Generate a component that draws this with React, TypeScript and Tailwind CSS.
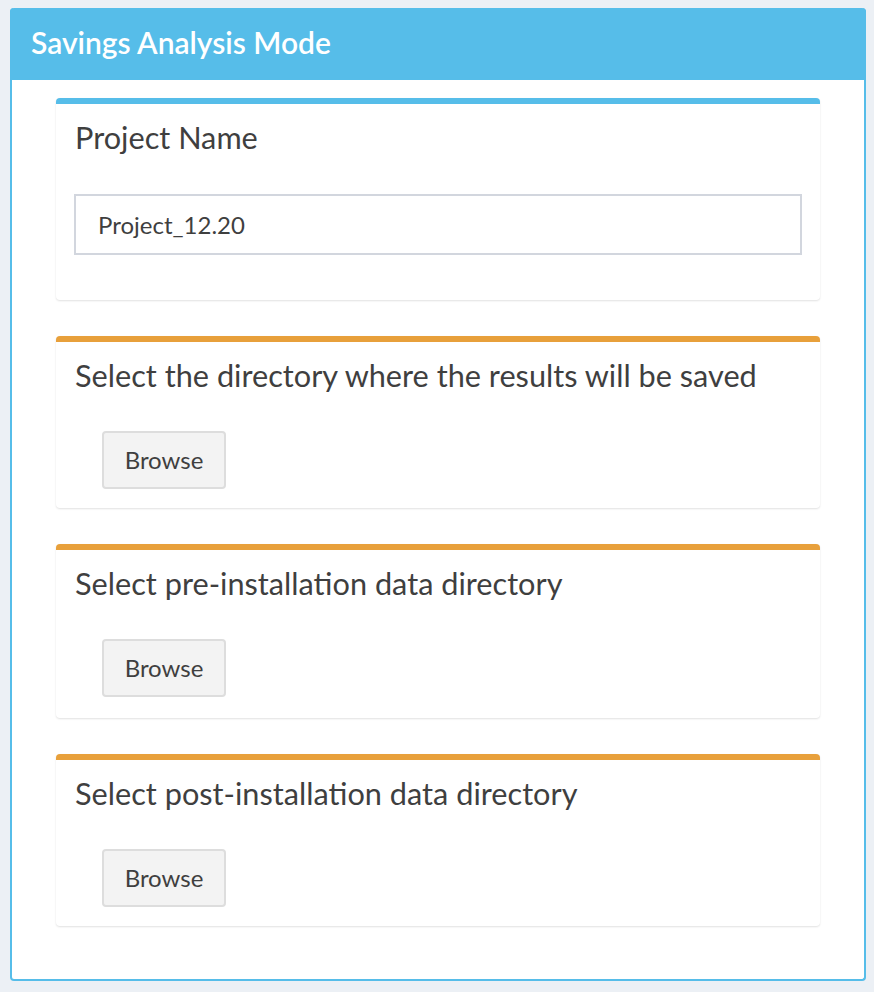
const sections = [
  { title: "Select the directory where the results will be saved", pb: "pb-[19px]" },
  { title: "Select pre-installation data directory", pb: "pb-[21px]" },
  { title: "Select post-installation data directory", pb: "pb-[19px]" },
];

function Card({
  accent,
  title,
  children,
  bodyClass,
}: {
  accent: string;
  title: string;
  children: React.ReactNode;
  bodyClass: string;
}) {
  return (
    <div
      className={`bg-white rounded-[4px] border-t-[6px] shadow-[0_1px_2px_rgba(0,0,0,0.12)] ${accent}`}
    >
      <h3 className="pt-[16px] pl-[19px] text-[30.7px] leading-[36px] text-[#3f3f3f]">{title}</h3>
      <div className={bodyClass}>{children}</div>
    </div>
  );
}

function BrowseButton() {
  return (
    <button className="ml-[46px] h-[58px] w-[124px] rounded-[4px] border-2 border-[#dddddd] bg-[#f3f3f3] text-[24px] text-[#3f3f3f]">
      Browse
    </button>
  );
}

export default function App() {
  return (
    <div
      className="min-h-[992px] bg-[#ecf0f5] pt-[8px] pl-[10px] pr-[8px]"
      style={{ fontFamily: "Lato, 'Liberation Sans', sans-serif" }}
    >
      <div className="h-[973px] rounded-[4px] border-2 border-t-0 border-[#56bde9] bg-white">
        {/* Header */}
        <div className="h-[72px] -mx-[2px] rounded-t-[4px] bg-[#56bde9] pl-[21px] pt-[16px]">
          <h2 className="text-[30px] leading-[36px] font-semibold text-white">Savings Analysis Mode</h2>
        </div>

        <div className="flex flex-col gap-[36px] px-[44px] pt-[18px]">
          <Card accent="border-[#56bde9]" title="Project Name" bodyClass="pt-[38px] pb-[45px] px-[18px]">
            <div className="h-[61px] border-2 border-[#d2d6de] pl-[22px] flex items-center text-[24px] text-[#3f3f3f]">
              Project_12.20
            </div>
          </Card>

          {sections.map((s) => (
            <Card key={s.title} accent="border-[#e8a03b]" title={s.title} bodyClass={`pt-[37px] ${s.pb}`}>
              <BrowseButton />
            </Card>
          ))}
        </div>
      </div>
    </div>
  );
}
